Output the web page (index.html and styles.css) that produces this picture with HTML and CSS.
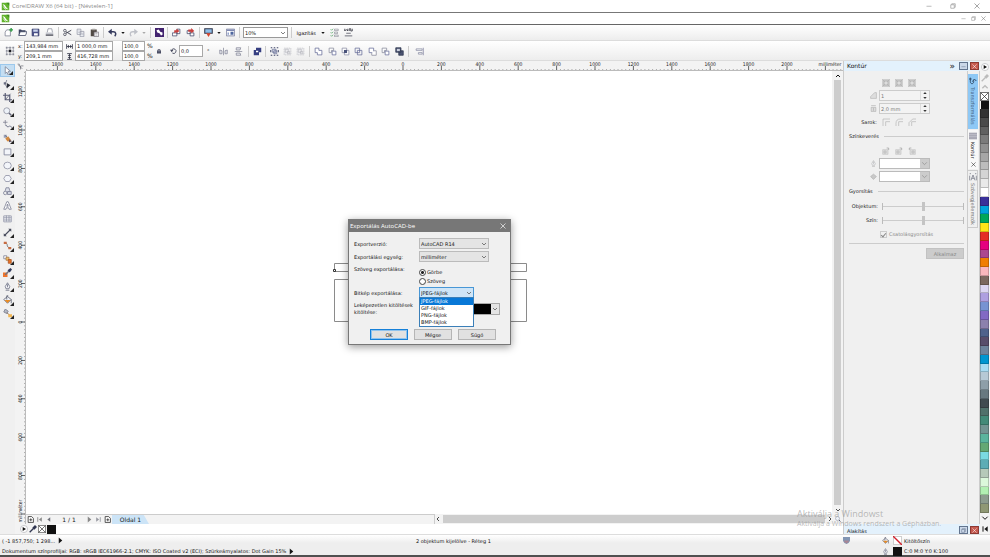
FILE: index.html
```html
<!DOCTYPE html>
<html lang="hu">
<head>
<meta charset="utf-8">
<title>CorelDRAW X6 (64 bit) - [Névtelen-1]</title>
<link rel="stylesheet" href="styles.css">
</head>
<body>
<svg class="defs" aria-hidden="true">
  <symbol id="logo" viewBox="0 0 12 12"><path fill="#62b32c" d="M1 1h10v10H1z"/><path fill="#3d8a20" d="M7 1h4v4z"/><path d="M2 2.500l3 1.500 2 3 3 3-4-1.500-2-3z" fill="#fff"/><path d="M3 6l3 4" stroke="#fff"/></symbol>
  <symbol id="new" viewBox="0 0 12 12"><path d="M3.500 2.500h5v8h-7v-5z" fill="#fff" stroke="#777b8c"/><path d="M9.500 0v5M7 2.500h5" stroke="#2f9a43" stroke-width="1.800"/></symbol>
  <symbol id="open" viewBox="0 0 12 12"><path d="M1 10V2h3l1 1h5v2" fill="#39405c"/><path d="M1 10l2-5h9l-2 5z" fill="#fff" stroke="#39405c"/></symbol>
  <symbol id="save" viewBox="0 0 12 12"><path d="M1.500 1.500h9v9h-9z" fill="#4a5188" stroke="#343a68"/><path d="M3 2h6v3H3z" fill="#c9d3ea"/><path d="M4 7h5v3H4z" fill="#fff"/></symbol>
  <symbol id="print" viewBox="0 0 12 12"><path d="M3 6l1-5h5l1 5" fill="#fff" stroke="#8a8d99"/><path d="M1 6h10v3H1z" fill="#c4c6ce"/><path d="M1 9.500h10" stroke="#383a46" stroke-width="1.500"/></symbol>
  <symbol id="cut" viewBox="0 0 12 12"><path d="M11 3L4 7M11 9L4 5" stroke="#3f4250" stroke-width="1.200"/><circle cx="2.500" cy="3.500" r="1.700" fill="none" stroke="#3f4250"/><circle cx="2.500" cy="8.500" r="1.700" fill="none" stroke="#3f4250"/></symbol>
  <symbol id="copy" viewBox="0 0 12 12"><path d="M1.500 1.500h5v7h-5zM5.500 4.500h5v7h-5z" fill="#f4f6fa" stroke="#9497a5"/><path d="M7 7h3M7 9h3M3 4h2M3 6h2" stroke="#9497a5" stroke-width=".7"/></symbol>
  <symbol id="paste" viewBox="0 0 12 12"><path d="M1 2h8v9H1z" fill="#514a44"/><path d="M3 1h4v2H3z" fill="#a9a6a2"/><path d="M5.500 5.500h6v6h-6z" fill="#fff" stroke="#77717b"/><path d="M7 7.500h3M7 9.500h3" stroke="#77717b" stroke-width=".7"/></symbol>
  <symbol id="undo" viewBox="0 0 12 12"><path d="M3 5h4c4 0 4 4 2 6" fill="none" stroke="#34395c" stroke-width="2"/><path d="M5 1v8L0 5z" fill="#34395c"/></symbol>
  <symbol id="redo" viewBox="0 0 12 12"><path d="M9 5H5C1 5 1 9 3 11" fill="none" stroke="#bfc1c8" stroke-width="1.800"/><path d="M7 1v8l5-4z" fill="#bfc1c8"/></symbol>
  <symbol id="connect" viewBox="0 0 12 12"><path d="M0 0h12v12H0z" fill="#43246f"/><path d="M2 3l3-1 2 3 3 1v3L8 10 6 7 3 6z" fill="#fff"/></symbol>
  <symbol id="import" viewBox="0 0 12 12"><path d="M.5 6.500h6v4h-6zM6.500 1.500h4v6h-4z" fill="#fff" stroke="#3f4465"/><path d="M3 7V3h3V1l4 3-4 3V5" fill="#c83d3b"/></symbol>
  <symbol id="export" viewBox="0 0 12 12"><path d="M1.500 3.500h4v4h-4zM5.500 6.500h5v4h-5z" fill="#fff" stroke="#3f4465"/><path d="M3 5V2h4V0l4 4-4 3V5" fill="#c83d3b"/></symbol>
  <symbol id="launch" viewBox="0 0 12 12"><path d="M1 1h10v6H1z" fill="#8fbde6" stroke="#32364a" stroke-width="1.400"/><path d="M3 7h6L6 12z" fill="#d8452c"/></symbol>
  <symbol id="welcome" viewBox="0 0 12 12"><path d="M.5 1.500h11v9H.5z" fill="#fff" stroke="#6a7094"/><path d="M1 2h10v2H1z" fill="#7f89b3"/><path d="M2 6h2v3H2z" fill="#8fa2ce"/><path d="M6 5h4v4H6z" fill="#4f679f"/></symbol>
  <symbol id="options" viewBox="0 0 12 12"><path d="M1 2l1 1 2-2M1 6l1 1 2-2M1 10l1 1 2-2" fill="none" stroke="#35944a"/><path d="M6 1.500h5v2H6zM6 5.500h4v2H6zM6 9.500h5v2H6z" fill="#fff" stroke="#6d6f7d" stroke-width=".7"/></symbol>
  <symbol id="launcher" viewBox="0 0 12 12"><path d="M1 1v3l2-2 2 2V1m2 3V1h2v3h2V1" fill="none" stroke="#272834"/><path d="M3 7h6M1 10.500h10" stroke="#464855"/></symbol>
  <symbol id="caret" viewBox="0 0 12 12"><path d="M1 3h10L6 9z" fill="currentColor"/></symbol>
  <symbol id="chev" viewBox="0 0 12 12"><path d="M2 4l4 4 4-4" fill="none" stroke="currentColor" stroke-width="1.500"/></symbol>
  <symbol id="chevup" viewBox="0 0 12 12"><path d="M2 8l4-4 4 4" fill="none" stroke="currentColor" stroke-width="2"/></symbol>
  <symbol id="origin" viewBox="0 0 12 12"><path d="M2 2h8v8H2zM6 2v8M2 6h8" fill="none" stroke="#7b7d8b" stroke-dasharray="1 1"/><path d="M1 1h2v2H1zM5 1h2v2H5zM9 1h2v2H9zM1 5h2v2H1zM9 5h2v2H9zM1 9h2v2H1zM5 9h2v2H5zM9 9h2v2H9z" fill="#8d8f9b"/><path d="M4.500 4.500h3v3h-3z" fill="#181920"/></symbol>
  <symbol id="wide" viewBox="0 0 12 12"><path d="M1 2v8M11 2v8M2 6h8" stroke="#333647" stroke-width="1.400"/><path d="M2 6l3-3v6zM10 6L7 3v6z" fill="#333647"/></symbol>
  <symbol id="tall" viewBox="0 0 12 12"><path d="M2 1h8M2 11h8M6 2v8" stroke="#333647" stroke-width="1.400"/><path d="M6 2L3 5h6zM6 10L3 7h6z" fill="#333647"/></symbol>
  <symbol id="lock" viewBox="0 0 12 12"><path d="M4 6V3h4v3" fill="none" stroke="#44475d" stroke-width="1.300"/><path d="M2 5h8v6H2z" fill="#44475d"/><path d="M3 7.500h6" stroke="#8d91ac"/></symbol>
  <symbol id="rotate" viewBox="0 0 12 12"><path d="M3 4a4 4 0 1 1 1 5.500" fill="none" stroke="#45485d" stroke-width="1.500"/><path d="M0 4h6L3 8z" fill="#45485d"/></symbol>
  <symbol id="mirrorh" viewBox="0 0 12 12"><path d="M1 9V4l3 1v4zM11 9V4L8 5v4z" fill="#e6e7ed" stroke="#858899"/><path d="M6 1v10" stroke="#858899"/></symbol>
  <symbol id="mirrorv" viewBox="0 0 12 12"><path d="M3 1h6L8 4H3zM3 11h6L8 8H3z" fill="#e6e7ed" stroke="#858899"/><path d="M1 6h10" stroke="#858899"/></symbol>
  <symbol id="combine" viewBox="0 0 12 12"><path d="M4 1h7v6H4z" fill="#343d80"/><path d="M1 4h7v7H1z" fill="#343d80"/><path d="M4 5h3v2H4z" fill="#fff"/></symbol>
  <symbol id="group" viewBox="0 0 12 12"><path d="M1 1h2M5 1h2M9 1h2M1 11h2M5 11h2M9 11h2M1 4v3M11 4v3" stroke="#3b4163" stroke-width="1.300"/><path d="M3 3h5v4H3zM5 5h4v4H5z" fill="#dfe2ee" stroke="#6a7195"/></symbol>
  <symbol id="ungroup" viewBox="0 0 12 12"><path d="M1.500 1.500h9v9h-9z" fill="#ececef" stroke="#c4c5ca" stroke-dasharray="2 1"/><path d="M3 3h4v4H3zM6 6h3v3H6z" fill="none" stroke="#bbbcc2"/></symbol>
  <symbol id="weld" viewBox="0 0 12 12"><path d="M1.500 1.500h5v3h4v6h-6v-3h-3z" fill="#fff" stroke="#656b98"/></symbol>
  <symbol id="trim" viewBox="0 0 12 12"><path d="M1.500 1.500h6v3h-3v3h-3z" fill="#fff" stroke="#858899"/><path d="M5.500 5.500h5v5h-5z" fill="#fff" stroke="#656b98"/></symbol>
  <symbol id="intersect" viewBox="0 0 12 12"><path d="M1.500 1.500h6v6h-6zM4.500 4.500h6v6h-6z" fill="#fff" stroke="#888ba3"/><path d="M4 4h4v4H4z" fill="#48527a"/></symbol>
  <symbol id="simplify" viewBox="0 0 12 12"><path d="M1.500 1.500h6v6h-6zM4.500 4.500h6v6h-6z" fill="none" stroke="#656b98"/></symbol>
  <symbol id="front" viewBox="0 0 12 12"><path d="M1.500 1.500h6v6h-6z" fill="#fff" stroke="#656b98"/><path d="M8 5h3v6H5V8" fill="#fff" stroke="#858899"/></symbol>
  <symbol id="boundary" viewBox="0 0 12 12"><path d="M1 1h7v6H1zM5 5h6v6H5z" fill="#4a5370" stroke="#303951"/><path d="M2.500 2.500h4v3h-4z" fill="#cbd0dd"/></symbol>
  <symbol id="align" viewBox="0 0 12 12"><path d="M11 1v10" stroke="#777a99"/><path d="M1.500 2.500h8v2h-8zM4.500 7.500h5v2h-5z" fill="#fff" stroke="#888ba3"/></symbol>
  <symbol id="pick" viewBox="0 0 12 12"><path d="M3 1v9l2-2 2 4 1.500-1L7 7h3z" fill="#fff" stroke="#737789"/></symbol>
  <symbol id="shape" viewBox="0 0 12 12"><path d="M5 0L3 6l3 5" fill="none" stroke="#6b7086"/><path d="M1 3h3v3H1z" fill="#686c80"/><path d="M5 4v7l5-4z" fill="#262933"/></symbol>
  <symbol id="crop" viewBox="0 0 12 12"><path d="M3 0v9h9M0 3h9v9" fill="none" stroke="#575b73" stroke-width="1.600"/><path d="M3 9l7-8" stroke="#575b73"/></symbol>
  <symbol id="zoom" viewBox="0 0 12 12"><circle cx="5" cy="5" r="4" fill="#edf2f8" stroke="#8b8e9c"/><path d="M8 8l3 3" stroke="#62657a" stroke-width="2"/></symbol>
  <symbol id="free" viewBox="0 0 12 12"><path d="M3 0v6M0 3h6" stroke="#777a8b"/><path d="M3 7c3-1 1 3 4 2s1-2 5 1" fill="none" stroke="#686c82" stroke-width="1.200"/></symbol>
  <symbol id="smart" viewBox="0 0 12 12"><path d="M1 1h4v4H1z" fill="#99a0b5"/><path d="M3 2l8 7" stroke="#5b5e70"/><path d="M3 6l4-3 4 6-5 1z" fill="#d38a3f"/><path d="M8 7l4 3-4 1z" fill="#5f5365"/></symbol>
  <symbol id="rect" viewBox="0 0 12 12"><path d="M1.500 2.500h9v8h-9z" fill="#f3f5fa" stroke="#747890"/></symbol>
  <symbol id="ellipse" viewBox="0 0 12 12"><ellipse cx="6" cy="6" rx="5" ry="4.500" fill="#f3f5fa" stroke="#888b9f"/></symbol>
  <symbol id="polygon" viewBox="0 0 12 12"><path d="M3.500 2h5L11 6l-2.500 4h-5L1 6z" fill="#f3f5fa" stroke="#888b9f"/></symbol>
  <symbol id="basic" viewBox="0 0 12 12"><path d="M4 1h4l1 4-3 3-3-3z" fill="#dadde7" stroke="#757990"/><circle cx="3" cy="8" r="2.300" fill="#eee" stroke="#757990"/><path d="M6 6h5v4H6z" fill="#cdd1dd" stroke="#757990"/></symbol>
  <symbol id="text" viewBox="0 0 12 12"><path d="M1 11l4-10h2l4 10H8L7.500 9h-3L4 11zM5 7h2L6 4z" fill="#fff" stroke="#777b90"/></symbol>
  <symbol id="table" viewBox="0 0 12 12"><path d="M1 2.500h10v8H1zM1 5h10M1 8h10M4.500 2v8M8 2v8" fill="#f7f8fb" stroke="#8a8da1"/></symbol>
  <symbol id="dimension" viewBox="0 0 12 12"><path d="M2 10l8-8" stroke="#474b5c" stroke-width="1.500"/><path d="M1 7l4 4H1zM11 5L7 1h4z" fill="#474b5c"/></symbol>
  <symbol id="connector" viewBox="0 0 12 12"><path d="M3 3c5 0 0 5 6 6" fill="none" stroke="#555"/><path d="M1 1h4v3H1zM7 8h4v3H7z" fill="#c76b41"/></symbol>
  <symbol id="blend" viewBox="0 0 12 12"><path d="M1 1h4v4H1z" fill="#fff" stroke="#777b90"/><path d="M4 3h4v4H4z" fill="#eec06c" stroke="#a97540"/><path d="M7 6h4v5H7z" fill="#e87123" stroke="#a75122"/></symbol>
  <symbol id="dropper" viewBox="0 0 12 12"><path d="M0 6h6v6H0z" fill="#ed742d"/><path d="M3 9l5-5" stroke="#6d7284" stroke-width="2"/><path d="M6 3l3 3 3-4-2-2z" fill="#30395c"/></symbol>
  <symbol id="pipette" viewBox="0 0 12 12"><path d="M1 11l6-6" stroke="currentColor" stroke-width="2"/><path d="M5 4l3 3 4-4-3-3z" fill="currentColor"/></symbol>
  <symbol id="pen" viewBox="0 0 12 12"><path d="M6 1l3 5-1 3H4L3 6z" fill="#f3f4f7" stroke="currentColor"/><path d="M6 3v4M3.500 11h5" stroke="currentColor"/></symbol>
  <symbol id="bucket" viewBox="0 0 12 12"><path d="M1 6l5-4 5 4-5 5z" fill="#eef0f4" stroke="#525669"/><path d="M2 6.500h8l-4 4z" fill="#e88a22"/><path d="M5 6V1h2M11 6v5" fill="none" stroke="#525669"/></symbol>
  <symbol id="ifill" viewBox="0 0 12 12"><path d="M3 0l4 3-2 3-4-2z" fill="#b5b9c4" stroke="#717588"/><path d="M5 5l5 4" stroke="#7b5a3d"/><path d="M7 7h5v4H7z" fill="#f3b650"/></symbol>
  <symbol id="rulercorner" viewBox="0 0 12 12"><path d="M1 2h3v3M6 5h5M6 5v6M3 4l6 6" fill="none" stroke="#4e505b"/></symbol>
  <symbol id="page" viewBox="0 0 12 12"><path d="M2 1h6l3 3v7H2z" fill="#fff" stroke="#333" stroke-width="1.400"/><path d="M6.500 4v5M4 6.500h5" stroke="#333" stroke-width="1.400"/></symbol>
  <symbol id="prev" viewBox="0 0 12 12"><path d="M9 2v8L4 6z" fill="#70727b"/></symbol>
  <symbol id="next" viewBox="0 0 12 12"><path d="M3 1v10l6-5z" fill="currentColor"/></symbol>
  <symbol id="first" viewBox="0 0 12 12"><path d="M10 2v8L5 6z" fill="currentColor"/><path d="M3 2v8" stroke="currentColor" stroke-width="1.500"/></symbol>
  <symbol id="last" viewBox="0 0 12 12"><path d="M2 2v8l5-4z" fill="#9698a0"/><path d="M9 2v8" stroke="#9698a0" stroke-width="1.500"/></symbol>
  <symbol id="play" viewBox="0 0 12 12"><circle cx="6" cy="6" r="5.300" fill="#fff" stroke="#b1b2b7"/><path d="M4 3l5 3-5 3z" fill="#111"/></symbol>
  <symbol id="nofill" viewBox="0 0 12 12"><path d="M.5.5h11v11H.5zM1 1l10 10M11 1L1 11" fill="#fff" stroke="#303030"/></symbol>
  <symbol id="noinside" viewBox="0 0 12 12"><path d="M.5.5h11v11H.5z" fill="#fff" stroke="#b5b5b5"/><path d="M0 0l12 12" stroke="#d4202c" stroke-width="1.800"/></symbol>
  <symbol id="min" viewBox="0 0 12 12"><path d="M1 6.500h10" stroke="currentColor"/></symbol>
  <symbol id="max" viewBox="0 0 12 12"><path d="M3.500 3V1.500h7v7H9M1.500 3.500h7v7h-7z" fill="none" stroke="currentColor"/></symbol>
  <symbol id="close" viewBox="0 0 12 12"><path d="M1 1l10 10M11 1L1 11" stroke="currentColor" stroke-width="1.300"/></symbol>
  <symbol id="outset" viewBox="0 0 12 12"><path d="M0 0h12v12H0z" fill="#cfcfcf"/><path d="M3 3h6v6H3z" fill="#ddd" stroke="#aaa"/><path d="M1 1l3 3M11 1L8 4M1 11l3-3M11 11L8 8" stroke="#aaa"/></symbol>
  <symbol id="steps" viewBox="0 0 12 12"><path d="M1 11V8l7-7h3v10z" fill="#ddd" stroke="#b0b0b0"/></symbol>
  <symbol id="offset" viewBox="0 0 12 12"><path d="M2 1h8M2 4h8v7H2zM6 5v5" fill="#ddd" stroke="#aaa"/></symbol>
  <symbol id="corner1" viewBox="0 0 12 12"><path d="M1.500 12V1.500H12M5.500 12V5.500H12" fill="none" stroke="#b4b4b4"/></symbol>
  <symbol id="corner2" viewBox="0 0 12 12"><path d="M1.500 12V8q0-6.500 6.500-6.500h4M5.500 12V5.500H12" fill="none" stroke="#b4b4b4"/></symbol>
  <symbol id="corner3" viewBox="0 0 12 12"><path d="M1.500 12V7l5.500-5.500h5M5.500 12V5.500H12" fill="none" stroke="#b4b4b4"/></symbol>
  <symbol id="colorpath" viewBox="0 0 12 12"><path d="M1 4h8v7H1z" fill="#ddd" stroke="#c4c4c4"/><path d="M3 6h3v3H3z" fill="none" stroke="#b6b6b6"/><path d="M7 1.500h3v3" fill="none" stroke="#999"/></symbol>
  <symbol id="greybucket" viewBox="0 0 12 12"><path d="M1 6l5-4 5 4-5 5z" fill="#c9c9c9" stroke="#aaa"/></symbol>
  <symbol id="transform" viewBox="0 0 12 12"><path d="M2 1v6c0 4 5 4 5 0V5M5 7l3-4 3 3M0 3h4" fill="none" stroke="#2d4763" stroke-width="1.400"/></symbol>
  <symbol id="bar" viewBox="0 0 12 12"><path d="M0 1h12v10H0z" fill="#a8a8b4"/><path d="M0 4h12M0 7h12" stroke="#c8c8d2"/></symbol>
  <symbol id="textprops" viewBox="0 0 12 12"><path d="M1 1h2M9 1h2M1 4v7M11 4v7M3 11l3-8 3 8M4 8h4" fill="none" stroke="#666a78"/></symbol>
  <symbol id="shield" viewBox="0 0 12 12"><path d="M0 0h12v7q-2 4-6 5Q2 11 0 7z" fill="#8296b4"/><path d="M2 6h8v2l-4 3-4-3z" fill="#a88594"/></symbol>
</svg>

<header class="title"><svg class="ic"><use href="#logo"/></svg><h1>CorelDRAW X6 (64 bit) - [Névtelen-1]</h1>
  <div class="winbtns"><button aria-label="Kis méret"><svg><use href="#min"/></svg></button><button aria-label="Előző méret"><svg><use href="#max"/></svg></button><button aria-label="Bezárás"><svg><use href="#close"/></svg></button></div>
</header>
<div class="title child"><svg class="ic"><use href="#logo"/></svg>
  <div class="winbtns small"><button aria-label="Dokumentum kis méret"><svg><use href="#min"/></svg></button><button aria-label="Dokumentum előző méret"><svg><use href="#max"/></svg></button><button aria-label="Dokumentum bezárása"><svg><use href="#close"/></svg></button></div>
</div>

<nav class="bar standard" aria-label="Szokásos eszköztár">
  <div class="grp"><button aria-label="Új"><svg><use href="#new"/></svg></button><button aria-label="Megnyitás"><svg><use href="#open"/></svg></button><button aria-label="Mentés"><svg><use href="#save"/></svg></button><button aria-label="Nyomtatás"><svg><use href="#print"/></svg></button></div>
  <div class="grp"><button aria-label="Kivágás"><svg><use href="#cut"/></svg></button><button aria-label="Másolás"><svg><use href="#copy"/></svg></button><button aria-label="Beillesztés"><svg><use href="#paste"/></svg></button></div>
  <div class="grp"><button aria-label="Visszavonás"><svg><use href="#undo"/></svg></button><svg class="car"><use href="#caret"/></svg><button aria-label="Mégis"><svg><use href="#redo"/></svg></button><svg class="car dim"><use href="#caret"/></svg></div>
  <div class="grp"><button aria-label="Corel CONNECT"><svg><use href="#connect"/></svg></button></div>
  <div class="grp"><button aria-label="Importálás"><svg><use href="#import"/></svg></button><button aria-label="Exportálás"><svg><use href="#export"/></svg></button></div>
  <div class="grp"><button aria-label="Alkalmazásindító"><svg><use href="#launch"/></svg></button><svg class="car"><use href="#caret"/></svg><button aria-label="Üdvözlőképernyő"><svg><use href="#welcome"/></svg></button></div>
  <div class="grp"><div class="pick zoomlevel"><select aria-label="Nagyítás"><option>10%</option></select><svg><use href="#chev"/></svg></div></div>
  <div class="grp last"><button class="word">Igazítás</button><svg class="car"><use href="#caret"/></svg><button aria-label="Beállítások"><svg><use href="#options"/></svg></button><button aria-label="Indító"><svg><use href="#launcher"/></svg></button></div>
</nav>

<section class="bar props" aria-label="Tulajdonságsor">
  <div class="pos"><svg class="ic"><use href="#origin"/></svg><div class="fields"><label for="px">x:</label><input id="px" value="143,984 mm"><label for="py">y:</label><input id="py" value="209,1 mm"></div></div>
  <div class="size"><div class="fields"><svg><use href="#wide"/></svg><input aria-label="Szélesség" value="1 000,0 mm"><svg><use href="#tall"/></svg><input aria-label="Magasság" value="416,728 mm"></div></div>
  <div class="scale"><div class="fields"><input aria-label="Vízszintes méretezés" value="100,0"><span>%</span><input aria-label="Függőleges méretezés" value="100,0"><span>%</span></div><svg class="lock"><use href="#lock"/></svg></div>
  <div class="rot"><svg><use href="#rotate"/></svg><input aria-label="Forgatás" value="0,0"><span>°</span></div>
  <div class="grp"><button aria-label="Tükrözés vízszintesen"><svg><use href="#mirrorh"/></svg></button><button aria-label="Tükrözés függőlegesen"><svg><use href="#mirrorv"/></svg></button></div>
  <div class="grp"><button aria-label="Kombinálás"><svg><use href="#combine"/></svg></button></div>
  <div class="grp"><button aria-label="Csoportosítás"><svg><use href="#group"/></svg></button><button aria-label="Csoport bontása"><svg><use href="#ungroup"/></svg></button><button aria-label="Összes bontása"><svg><use href="#ungroup"/></svg></button></div>
  <div class="grp"><button aria-label="Összeforrasztás"><svg><use href="#weld"/></svg></button><button aria-label="Levágás"><svg><use href="#trim"/></svg></button><button aria-label="Metszet"><svg><use href="#intersect"/></svg></button><button aria-label="Egyszerűsítés"><svg><use href="#simplify"/></svg></button><button aria-label="Elöl mínusz hátul"><svg><use href="#front"/></svg></button><button aria-label="Hátul mínusz elöl"><svg><use href="#trim"/></svg></button><button aria-label="Határvonal"><svg><use href="#boundary"/></svg></button></div>
  <div class="grp last"><button aria-label="Igazítás és elosztás"><svg><use href="#align"/></svg></button></div>
</section>

<main class="work">
  <nav class="tools" aria-label="Eszköztár">
    <button class="on" aria-label="Kijelölés"><svg><use href="#pick"/></svg></button><button aria-label="Alakzat"><svg><use href="#shape"/></svg></button><button aria-label="Körülvágás"><svg><use href="#crop"/></svg></button><button aria-label="Nagyító"><svg><use href="#zoom"/></svg></button><button aria-label="Szabadkézi"><svg><use href="#free"/></svg></button><button aria-label="Intelligens kitöltés"><svg><use href="#smart"/></svg></button><button aria-label="Téglalap"><svg><use href="#rect"/></svg></button><button aria-label="Ellipszis"><svg><use href="#ellipse"/></svg></button><button aria-label="Sokszög"><svg><use href="#polygon"/></svg></button><button aria-label="Alapalakzatok"><svg><use href="#basic"/></svg></button><button class="single" aria-label="Szöveg eszköz"><svg><use href="#text"/></svg></button><button class="single" aria-label="Táblázat"><svg><use href="#table"/></svg></button><button aria-label="Méretezés"><svg><use href="#dimension"/></svg></button><button aria-label="Összekötő"><svg><use href="#connector"/></svg></button><button aria-label="Átmenet"><svg><use href="#blend"/></svg></button><button aria-label="Színpipetta"><svg><use href="#dropper"/></svg></button><button aria-label="Körvonaltoll"><svg class="slate"><use href="#pen"/></svg></button><button aria-label="Kitöltés"><svg><use href="#bucket"/></svg></button><button aria-label="Interaktív kitöltés"><svg><use href="#ifill"/></svg></button>
  </nav>

  <section class="doc">
    <div class="corner"><svg><use href="#rulercorner"/></svg></div>
    <svg class="hruler" id="hruler"><path class="ticks minor" d="M-7 9h1600"/><path class="ticks major" d="M-7 7h1600"/></svg>
    <svg class="vruler" id="vruler"><path class="ticks minor" d="M10 -18v1200"/><path class="ticks major" d="M8 -18v1200"/></svg>
    <div class="canvas">
      <svg class="drawing" viewBox="0 0 200 66" aria-label="Rajz"><path d="M4.500 4.500h192v8h-192zM4.500 20.500h192v42h-192z"/><path class="handle" d="M3.500 10.500h2v2h-2z"/></svg>
      <form class="dialog" role="dialog" aria-labelledby="dlgtitle">
        <div class="dlghead"><h2 id="dlgtitle">Exportálás AutoCAD-be</h2><button type="button" aria-label="Párbeszédpanel bezárása"><svg><use href="#close"/></svg></button></div>
        <div class="dlgbody">
          <label for="ver">Exportverzió:</label><div class="pick wide"><select id="ver"><option>AutoCAD R14</option></select><svg><use href="#chev"/></svg></div>
          <label for="unit">Exportálási egység:</label><div class="pick wide"><select id="unit"><option>milliméter</option></select><svg><use href="#chev"/></svg></div>
          <span class="top">Szöveg exportálása:</span><div class="radios"><label><input type="radio" name="t" checked>Görbe</label><label><input type="radio" name="t">Szöveg</label></div>
          <label for="bmp">Bitkép exportálása:</label><div class="dropdown"><div class="pick open"><select id="bmp"><option>JPEG-fájlok</option></select><svg><use href="#chev"/></svg></div>
            <ul role="listbox"><li role="option" aria-selected="true">JPEG-fájlok</li><li role="option">GIF-fájlok</li><li role="option">PNG-fájlok</li><li role="option">BMP-fájlok</li></ul></div>
          <span class="unmapped">Leképezetlen kitöltések<br>kitöltése:</span><button type="button" class="fillcolor" aria-label="Kitöltés színe"><i></i><svg><use href="#chev"/></svg></button>
        </div>
        <div class="dlgfoot"><button type="button" class="primary">OK</button><button type="button">Mégse</button><button type="button">Súgó</button></div>
      </form>
    </div>
    <div class="vscroll"><svg><use href="#chevup"/></svg><i></i><svg><use href="#chev"/></svg></div>
    <div class="pages">
      <div class="pagenav"><button aria-label="Oldal beszúrása elé"><svg><use href="#page"/></svg></button><button class="mute" aria-label="Első oldal"><svg><use href="#first"/></svg></button><button aria-label="Előző oldal"><svg><use href="#prev"/></svg></button><b>1 / 1</b><button class="mute" aria-label="Következő oldal"><svg><use href="#next"/></svg></button><button aria-label="Utolsó oldal"><svg><use href="#last"/></svg></button><button aria-label="Oldal beszúrása mögé"><svg><use href="#page"/></svg></button><button class="tab">Oldal 1</button></div>
      <div class="hscroll"><svg class="left"><use href="#chev"/></svg><i></i><svg class="right"><use href="#chev"/></svg><svg class="nav"><use href="#zoom"/></svg></div>
    </div>
    <div class="docpal"><svg><use href="#play"/></svg><svg class="ink"><use href="#pipette"/></svg><svg class="none"><use href="#nofill"/></svg><i></i></div>
  </section>

  <aside class="docker">
    <div class="dockhead"><h2>Kontúr</h2><span class="more">»</span><button aria-label="Kis méretű panel"><svg><use href="#min"/></svg></button><button class="x" aria-label="Panel bezárása"><svg><use href="#close"/></svg></button></div>
    <div class="panel">
      <div class="row icons"><svg><use href="#outset"/></svg><svg><use href="#outset"/></svg><svg><use href="#outset"/></svg></div>
      <div class="row"><label for="st"><svg><use href="#steps"/></svg></label><div class="spin"><input id="st" value="1"><span><svg><use href="#caret"/></svg><svg><use href="#caret"/></svg></span></div></div>
      <div class="row"><label for="of"><svg><use href="#offset"/></svg></label><div class="spin"><input id="of" value="2,0 mm"><span><svg><use href="#caret"/></svg><svg><use href="#caret"/></svg></span></div></div>
      <div class="row icons"><span class="lab">Sarok:</span><svg><use href="#corner1"/></svg><svg><use href="#corner2"/></svg><svg><use href="#corner3"/></svg></div>
      <h3>Színkeverés</h3>
      <div class="row icons"><svg><use href="#colorpath"/></svg><svg><use href="#colorpath"/></svg><svg class="flip"><use href="#colorpath"/></svg></div>
      <div class="row"><label for="oc"><svg class="pale"><use href="#pen"/></svg></label><div class="pick col"><select id="oc"></select><svg><use href="#chev"/></svg></div></div>
      <div class="row"><label for="fc"><svg><use href="#greybucket"/></svg></label><div class="pick col"><select id="fc"></select><svg><use href="#chev"/></svg></div></div>
      <h3>Gyorsítás</h3>
      <div class="row slide"><label for="ob">Objektum:</label><input id="ob" type="range"></div>
      <div class="row slide"><label for="sz">Szín:</label><input id="sz" type="range"></div>
      <label class="check"><input type="checkbox" checked disabled><span>Csatolásgyorsítás</span></label>
      <div class="apply"><button disabled>Alkalmaz</button></div>
    </div>
    <div class="tabs"><button class="blue"><svg><use href="#transform"/></svg><span>Transzformálás</span></button><button class="cur"><svg><use href="#bar"/></svg><span>Kontúr</span><svg class="tx"><use href="#close"/></svg></button><button><svg><use href="#textprops"/></svg><span>Szövegjellemzők</span></button></div>
    <div class="dockhead foot"><h2>Alakítás</h2><button aria-label="Alakítás visszaállítása"><svg><use href="#max"/></svg></button><button class="x" aria-label="Alakítás bezárása"><svg><use href="#close"/></svg></button></div>
  </aside>

  <aside class="palette" aria-label="Színpaletta"><svg><use href="#play"/></svg><svg class="soft"><use href="#pipette"/></svg><svg class="soft"><use href="#chevup"/></svg><svg class="nf"><use href="#nofill"/></svg><i class="k"></i><div id="swatches"></div><svg><use href="#chev"/></svg><svg><use href="#first"/></svg></aside>
  <p class="activate"><strong>Aktiválja a Windowst</strong><span>Aktiválja a Windows rendszert a Gépházban.</span></p>
</main>

<footer class="status">
  <span class="xy">( -1 857,750; 1 298... <svg><use href="#next"/></svg></span><span>2 objektum kijelölve - Réteg 1</span><svg class="shield"><use href="#shield"/></svg>
  <span class="fill"><svg><use href="#bucket"/></svg><svg class="nocolor"><use href="#noinside"/></svg>Kitöltőszín</span>
  <span class="profile">Dokumentum színprofiljai: RGB: sRGB IEC61966-2.1; CMYK: ISO Coated v2 (ECI); Szürkeárnyalatos: Dot Gain 15% <svg><use href="#next"/></svg></span>
  <span class="fill outline"><svg class="slate"><use href="#pen"/></svg><i></i>C:0 M:0 Y:0 K:100</span>
</footer>
<script src="app.js"></script>
</body>
</html>
```
FILE: styles.css
```css
* { box-sizing: border-box; }
body {
  margin: 0; height: 100vh; overflow: hidden;
  display: grid; grid-template-rows: 13px 12px 16px 20px minmax(0, 1fr) 23px;
  background: #f0f0f0; color: #151515;
  font: 5px/6px "DejaVu Sans", sans-serif;
}
h1, h2, h3, p, ul { margin: 0; padding: 0; font: inherit; }
i { font-style: normal; }
button, input, select { font: inherit; color: inherit; margin: 0; padding: 0; border: 0; background: none; border-radius: 0; min-width: 0; }
button { display: grid; place-items: center; }
svg { display: block; width: 8px; height: 8px; flex: none; }
.defs { position: absolute; width: 0; height: 0; }

.title { display: flex; align-items: center; gap: 2px; padding: 0 10px 0 1px; background: #fff; border-bottom: 1px solid #777; }
.title h1 { font: 6px/8px "Open Sans", sans-serif; color: #8b8b8b; }
.title .ic { width: 9px; height: 9px; }
.winbtns { display: flex; gap: 18px; margin-left: auto; color: #777; }
.winbtns svg { width: 6px; height: 6px; }
.child { border-color: #666; padding-right: 4px; }
.small { gap: 5px; }
.small svg { width: 5px; height: 5px; }

.bar { display: grid; align-items: center; background: linear-gradient(#fff, #ededed); border-bottom: 1px solid #dcdcdc; }
.standard { grid-template-columns: 59px 45px 47px 17px 32px 40px 52px 66px; }
.grp { display: flex; align-items: center; justify-content: space-around; border-right: 1px solid #ccc; height: 11px; padding: 0 2px; }
.grp.last { border: 0; }
.standard .grp svg, .props .grp svg { width: 9px; height: 9px; }
.standard .grp .car { width: 4px; height: 4px; }
.dim { color: #aaa; }
.pick { display: grid; align-items: center; background: #fff; border: 1px solid #999; height: 11px; }
.pick > * { grid-area: 1 / 1; }
.pick select { appearance: none; width: 100%; height: 100%; padding: 0 1px; outline: 0; }
.pick svg, .standard .pick svg { width: 6px; height: 6px; justify-self: end; margin-right: 1px; color: #555; pointer-events: none; }
.zoomlevel { width: 45px; flex: none; }

.props { grid-template-columns: 66px 53px 46px 49px 35px 17px 44px 99px 20px; }
.props > div { display: flex; align-items: center; }
.props input { background: #fff; border: 1px solid #a8a8a8; width: 100%; height: 10px; padding: 0 1px; }
.props .fields { display: grid; align-items: center; row-gap: 0; }
.pos { gap: 3px; padding: 0 2px 0 5px; }
.pos .fields { grid-template-columns: 6px 39px; flex: 1; }
.pos .ic { width: 10px; height: 10px; }
.size .fields { grid-template-columns: 9px 38px; }
.size svg { width: 7px; height: 7px; }
.size, .scale { height: 20px; }
.scale { gap: 3px; padding-left: 3px; }
.scale .fields { grid-template-columns: 23px 8px; }
.scale .fields span { padding-left: 2px; font-size: 6px; }
.lock { width: 6px; }
.rot { gap: 2px; padding-left: 5px; }
.rot svg { width: 7px; }
.props .rot input { width: 24px; height: 12px; }
.rot span { padding-left: 2px; }

.work { position: relative; display: grid; grid-template-columns: 15px minmax(0, 1fr) 137px 10px; min-height: 0; }
.tools { display: grid; grid-template-rows: repeat(19, 1fr); height: 256px; margin-top: 3px; }
.tools button { position: relative; }
.tools svg { width: 9px; height: 9px; }
.tools button::after { content: ""; position: absolute; right: 1px; bottom: 1px; border: solid transparent; border-width: 2px; border-right-color: #222; border-bottom-color: #222; }
.tools .single::after { display: none; }
.tools .on { background: #c5def2; border: 1px solid #9cc8ec; }
.slate { color: #65697d; }

.doc { display: grid; grid-template: 10px minmax(0, 1fr) 10px 10px / 11px minmax(0, 1fr) 11px; background: #f3f3f3; }
.corner { display: grid; place-items: center; }
.corner svg { width: 7px; height: 7px; }
.hruler { grid-column: 2 / 4; width: 100%; height: 10px; border-bottom: 1px solid #bbb; overflow: hidden; }
.vruler { grid-area: 2 / 1 / 4 / 2; width: 11px; height: 100%; border-right: 1px solid #bbb; overflow: hidden; }
.ticks { fill: none; stroke: #666; }
.minor { stroke-width: 1px; stroke-dasharray: 1 2.840; }
.major { stroke-width: 4px; stroke-dasharray: 1 37.400; }
.hruler text, .vruler text { font-family: "DejaVu Sans Condensed", "DejaVu Sans", sans-serif; font-size: 5px; fill: #222; text-anchor: middle; }
.canvas { grid-area: 2 / 2; position: relative; background: #fff; overflow: hidden; }
.drawing { position: absolute; left: 304px; top: 188px; width: 200px; height: 66px; fill: none; stroke: #8b8b8b; }
.handle { fill: #fff; stroke: #333; }

.dialog { position: absolute; left: 322px; top: 148px; width: 163px; background: #f0f0f0; border: 1px solid #777; box-shadow: 0 2px 8px #0006; }
.dlghead { display: flex; justify-content: space-between; align-items: center; height: 12px; padding: 0 4px 0 1px; background: #777; color: #fff; }
.dlghead h2 { font: 6px/8px "Open Sans", sans-serif; }
.dlghead svg { width: 6px; height: 6px; }
.dlgbody { display: grid; grid-template-columns: 65px 1fr; grid-template-rows: 11px 11px 21px 11px 18px; row-gap: 2px; align-items: center; padding: 6px 5px 0; white-space: nowrap; }
.dlgbody .top { align-self: start; padding-top: 2px; }
.unmapped { position: relative; line-height: 7px; }
.wide { width: 70px; background: #e4e4e4; border-color: #bbb; }
.radios { display: grid; gap: 1px; align-self: end; }
.radios label { display: flex; align-items: center; gap: 1px; height: 8px; }
input[type=radio] { appearance: none; width: 7px; height: 7px; border: 1px solid #444; border-radius: 50%; background: #fff; }
input[type=radio]:checked { background: radial-gradient(circle, #222 0 1px, #fff 2px); }
.dropdown { position: relative; width: 55px; }
.open { background: #cfe5f7; border-color: #4897d6; }
.dropdown ul { position: absolute; z-index: 1; top: 10px; left: 0; right: 0; list-style: none; background: #fff; border: 1px solid #3b7fb8; }
.dropdown li { height: 7px; line-height: 7px; padding-left: 1px; }
.dropdown li[aria-selected] { background: #0878d7; color: #fff; }
.fillcolor { display: flex; width: 81px; height: 12px; border: 1px solid #aaa; background: #e4e4e4; align-items: stretch; }
.fillcolor i { flex: 1; background: #000; }
.fillcolor svg { width: 6px; height: 6px; margin: 2px 1px; color: #555; }
.dlgfoot { display: flex; justify-content: flex-end; gap: 6px; padding: 11px 14px 4px; }
.dlgfoot button { width: 38px; height: 11px; background: #e1e1e1; border: 1px solid #b5b5b5; }
.dlgfoot .primary { border-color: #1680d8; box-shadow: inset 0 0 0 1px #8fc3ee; }

.vscroll { grid-area: 2 / 3 / 3 / 4; display: flex; flex-direction: column; align-items: center; padding: 2px 0 1px; }
.vscroll svg { width: 6px; height: 6px; }
.vscroll i { flex: 1; width: 7px; background: #cdcdcd; margin: 1px 0 2px; }
.pages { grid-column: 2 / 4; display: grid; grid-template-columns: 409px 1fr; }
.pagenav { display: flex; align-items: center; border: solid #ccc; border-width: 1px 1px 0 0; }
.pagenav button { width: 9px; }
.pagenav svg { width: 7px; height: 7px; }
.pagenav b { font-size: 6px; font-weight: 400; line-height: 8px; width: 32px; text-align: center; }
.pagenav .tab { width: 37px; height: 9px; background: #cce4f7; font-size: 6px; line-height: 8px; clip-path: polygon(0 0, 86% 0, 100% 100%, 0 100%); }
.mute { color: #888; }
.hscroll { display: flex; align-items: center; gap: 2px; padding-right: 2px; }
.hscroll svg { width: 6px; height: 6px; }
.hscroll i { flex: 1; height: 8px; background: #cdcdcd; }
.left { transform: rotate(90deg); }
.right { transform: rotate(-90deg); }
.docpal { grid-column: 1 / 4; display: flex; align-items: center; gap: 1px; padding-left: 5px; background: linear-gradient(90deg, #f3f3f3 41px, #fff 41px); }
.docpal .ink { color: #303650; }
.docpal i { width: 9px; height: 9px; background: #111; }

.docker { display: grid; grid-template: 10px minmax(0, 1fr) 10px / minmax(0, 1fr) 12px; border-left: 1px solid #ccc; }
.dockhead { grid-column: 1 / 3; display: flex; align-items: center; gap: 2px; padding: 0 1px 0 3px; background: #e3f1fc; }
.dockhead h2 { margin-right: auto; font-size: 6px; line-height: 8px; }
.more { font-size: 9px; line-height: 8px; padding-right: 2px; }
.dockhead button { width: 9px; height: 8px; border: 1px solid #62748e; background: #cad7e8; color: #4b5d78; }
.dockhead button svg { width: 5px; height: 5px; }
.dockhead .x { background: #c65a50; border-color: #8d3a34; color: #fff; }
.panel { padding: 5px 3px 0 5px; color: #222; border-right: 1px solid #ccc; }
.row { display: grid; grid-template-columns: 29px 51px; column-gap: 1px; align-items: center; height: 13px; }
.row > label, .lab { display: grid; justify-content: end; }
.row label svg { width: 7px; height: 7px; margin-right: 1px; }
.row.icons { display: flex; gap: 5px; padding-left: 33px; }
.row.icons .lab { margin-left: -33px; width: 28px; text-align: right; }
.flip { transform: scaleX(-1); }
.pale { color: #b0b0b0; }
.spin { display: flex; height: 11px; border: 1px solid #ccc; background: #f3f3f3; color: #777; }
.spin input { flex: 1; width: 0; padding-left: 1px; }
.spin span { display: grid; width: 9px; place-items: center; color: #333; border-left: 1px solid #ddd; }
.spin span svg { width: 4px; height: 4px; }
.spin span svg:first-child { transform: rotate(180deg); }
.panel h3 { display: flex; align-items: center; gap: 5px; height: 16px; }
.panel h3::after { content: ""; flex: 1; border-top: 1px solid #ccc; }
.col { border-color: #bbb; }
.col svg { background: #ccc; width: 9px; height: 9px; margin: 0; padding: 1px; color: #999; }
.row.slide { grid-template-columns: 29px minmax(0, 1fr); column-gap: 4px; height: 14px; }
input[type=range] { appearance: none; width: 100%; height: 7px; border: solid #bbb; border-width: 0 1px; background: linear-gradient(#ccc, #ccc) center / 100% 1px no-repeat; }
input[type=range]::-webkit-slider-thumb { appearance: none; width: 3px; height: 9px; background: #c4c4c4; }
.check { display: flex; align-items: center; gap: 2px; height: 17px; padding: 0 0 2px 31px; border-bottom: 1px solid #ccc; color: #888; }
.check input { appearance: none; width: 7px; height: 7px; border: 1px solid #ccc; display: grid; place-items: center; }
.check input::before { content: ""; width: 2px; height: 4px; border: solid #888; border-width: 0 1px 1px 0; transform: rotate(40deg); }
.apply { display: flex; justify-content: flex-end; padding-top: 4px; }
.apply button { width: 38px; height: 11px; background: #ccc; color: #888; border: 1px solid #c2c2c2; }
.tabs { display: flex; flex-direction: column; gap: 1px; padding-top: 3px; border-right: 1px solid #ccc; }
.tabs button { display: flex; flex-direction: column; align-items: center; gap: 2px; width: 10px; padding: 2px 0; border: 1px solid #ccc; border-left: 0; color: #777; }
.tabs span { writing-mode: vertical-rl; line-height: 8px; }
.tabs .blue { background: #8ec8f5; border-color: #8ec8f5; color: #466785; height: 55px; }
.tabs .cur { background: #f8f8f8; color: #222; height: 39px; border: 0; }
.tabs .tx { width: 5px; height: 5px; margin-top: auto; }
.foot { grid-row: 3; align-items: end; }
.foot h2 { font-size: 5px; line-height: 6px; }

.palette { display: grid; grid-template-rows: 12px 9px 10px 8px 9px minmax(0, 1fr) 10px 11px; justify-items: center; align-items: center; background: #f3f3f3; padding-right: 1px; }
.soft { color: #bbb; }
.nf { width: 9px; height: 9px; }
.k { width: 8px; height: 8px; background: #101010; }
#swatches { display: grid; grid-auto-rows: 1fr; width: 9px; height: 100%; background: #999; }
#swatches button { width: 9px; border: solid #0003; border-width: 0 1px 1px; }

.activate { position: absolute; left: 797px; bottom: 6px; display: grid; color: #9a9a9ab3; font: 7px/8px "Open Sans", sans-serif; pointer-events: none; white-space: nowrap; }
.activate strong { font-weight: 400; font-size: 9px; line-height: 12px; }

.status { display: grid; grid-template-columns: 416px 1fr 37px 110px; grid-template-rows: 11px 10px; align-items: center; background: linear-gradient(#fff, #eee 8px); border-top: 1px solid #ddd; border-bottom: 2px solid #505050; white-space: nowrap; }
.status span { display: flex; align-items: center; gap: 2px; }
.status svg { width: 7px; height: 7px; }
.xy, .profile { padding-left: 2px; }
.profile { grid-column: 1 / 4; }
.fill { padding-left: 2px; }
.fill i, .status .nocolor { width: 9px; height: 9px; margin-left: 2px; }
.fill i { background: #111; }
```
FILE: app.js
```js
const SVG = "http://www.w3.org/2000/svg";
const STEP = 38.4;

function label(ruler, text, x, y, vertical) {
  const t = document.createElementNS(SVG, "text");
  t.textContent = text;
  t.setAttribute("x", x);
  t.setAttribute("y", y);
  if (vertical) t.setAttribute("transform", `rotate(-90 ${x} ${y})`);
  ruler.append(t);
}

const h = document.getElementById("hruler");
for (let i = -9; i <= 10; i++) label(h, Math.abs(i) * 200, 377 + i * STEP, 5);
label(h, "milliméter", 804, 5);

const v = document.getElementById("vruler");
for (let i = -6; i <= 4; i++) label(v, Math.abs(i) * 200, 7, 251 + i * STEP, true);
label(v, "milliméter", 7, 440, true);

document.querySelectorAll(".ticks").forEach(p => {
  const start = p.closest("svg") === h ? 377 + 7 : 251 + 18;
  const period = p.classList.contains("major") ? STEP : STEP / 10;
  p.style.strokeDashoffset = period - (start % period) + 0.5;
});

const colors = ["#333", "#4a4a4a", "#606060", "#7b7b7b", "#909090", "#a6a6a6", "#bcbcbc", "#d4d4d4", "#e9e9e9", "#fff",
  "#39309a", "#00a3dc", "#00a65a", "#ffe519", "#e42d24", "#e5007f", "#ac478f", "#f07e00", "#f9b7bd", "#7b6860",
  "#dcd6f3", "#ae9fe0", "#7793d2", "#8269c4", "#8c81ad", "#4e628c", "#574d6b", "#6d839c", "#0095d0", "#a8dbf2",
  "#b6c9d5", "#8e9fa9", "#687980", "#404b50", "#50716b", "#438a78", "#739492", "#5bb49d", "#64a874", "#7bdae0",
  "#5cadb5", "#b6c9b9", "#dcf8db", "#b2f0b2", "#8d9c8e", "#8f9874"];
const box = document.getElementById("swatches");
for (const c of colors) {
  const b = document.createElement("button");
  b.style.background = c;
  b.ariaLabel = c;
  box.append(b);
}
```
